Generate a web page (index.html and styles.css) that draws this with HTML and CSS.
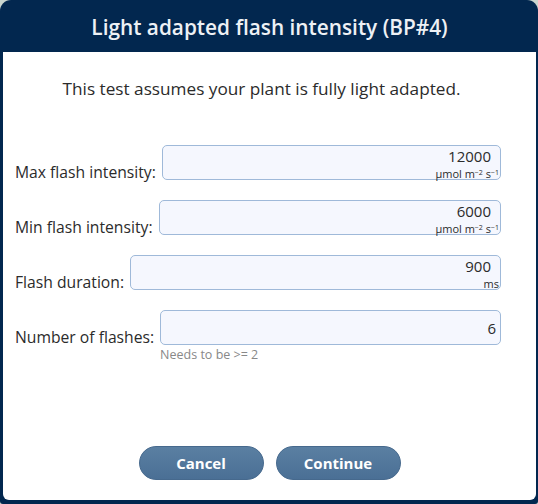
FILE: index.html
```html
<!DOCTYPE html>
<html>
<head>
<meta charset="utf-8">
<link rel="stylesheet" href="styles.css">
</head>
<body>
<div class="dialog">
  <div class="header"><h1 class="title">Light adapted flash intensity (BP#4)</h1></div>
  <div class="content">
    <p class="intro">This test assumes your plant is fully light adapted.</p>
    <div class="form">
      <div class="row">
        <label class="label">Max flash intensity:</label>
        <div class="field"><span class="value">12000</span><span class="unit">µmol m<sup>−2</sup> s<sup>−1</sup></span></div>
      </div>
      <div class="row">
        <label class="label">Min flash intensity:</label>
        <div class="field"><span class="value">6000</span><span class="unit">µmol m<sup>−2</sup> s<sup>−1</sup></span></div>
      </div>
      <div class="row">
        <label class="label">Flash duration:</label>
        <div class="field"><span class="value">900</span><span class="unit">ms</span></div>
      </div>
      <div class="row last">
        <label class="label">Number of flashes:</label>
        <div class="field-wrap">
          <div class="field single"><span class="value">6</span></div>
          <div class="hint">Needs to be &gt;= 2</div>
        </div>
      </div>
    </div>
    <div class="actions">
      <button class="btn">Cancel</button>
      <button class="btn">Continue</button>
    </div>
  </div>
</div>
</body>
</html>
```
FILE: styles.css
```css
html, body {
  margin: 0;
  padding: 0;
}
body {
  background: #c9d5cf;
  font-family: "Open Sans", "Noto Sans", sans-serif;
}
.dialog {
  width: 538px;
  height: 504px;
  box-sizing: border-box;
  background: #02274f;
  border-radius: 11px 11px 3px 3px;
  padding: 0 2px 4px 3px;
  display: flex;
  flex-direction: column;
}
.header {
  height: 52px;
  display: flex;
  align-items: center;
  justify-content: center;
}
.title {
  margin: 0;
  color: #eef1f5;
  font-size: 20.8px;
  font-weight: 600;
  line-height: 26px;
  padding-top: 2px;
}
.content {
  flex: 1;
  background: #ffffff;
  border-radius: 0 0 6px 6px;
  display: flex;
  flex-direction: column;
  padding: 0 35px 20px 12px;
}
.intro {
  margin: 25px 0 0;
  text-align: center;
  font-size: 17.2px;
  line-height: 24px;
  color: #2b2b2b;
  padding-left: 7px;
}
.form {
  margin-top: 44px;
  display: flex;
  flex-direction: column;
  gap: 20px;
}
.row {
  display: flex;
  align-items: flex-start;
  gap: 6px;
}
.label {
  font-size: 15.7px;
  line-height: 20px;
  height: 35px;
  box-sizing: border-box;
  padding-top: 17px;
  color: #2b2b2b;
  white-space: nowrap;
}
.field-wrap {
  flex: 1;
  display: flex;
  flex-direction: column;
}
.field {
  flex: 1;
  height: 35px;
  box-sizing: border-box;
  border: 1px solid #9fb9d9;
  border-radius: 5px;
  background: #f5f7fe;
  display: flex;
  flex-direction: column;
  align-items: flex-end;
  padding: 1px 1px 0 0;
}
.value {
  font-size: 15px;
  line-height: 18px;
  color: #2b2b2b;
  padding-right: 8px;
}
.unit {
  font-size: 11px;
  line-height: 12px;
  margin-top: 3px;
  color: #2b2b2b;
}
.unit sup {
  font-size: 7px;
  vertical-align: 3px;
  line-height: 0;
}
.field.single {
  flex: none;
  justify-content: center;
  padding-top: 0;
}
.field.single .value {
  padding-right: 3px;
}
.hint {
  font-size: 12.5px;
  line-height: 16px;
  color: #888;
  margin-top: 2px;
}
.actions {
  margin-top: auto;
  display: flex;
  justify-content: center;
  gap: 12px;
  padding-left: 23px;
}
.btn {
  width: 125px;
  height: 34px;
  border-radius: 17px;
  border: 1px solid #46698d;
  background: linear-gradient(#5a7fa2, #4a6f95);
  color: #ffffff;
  font-family: "Open Sans", "Noto Sans", sans-serif;
  font-size: 15px;
  font-weight: 700;
  padding: 0;
}
```
